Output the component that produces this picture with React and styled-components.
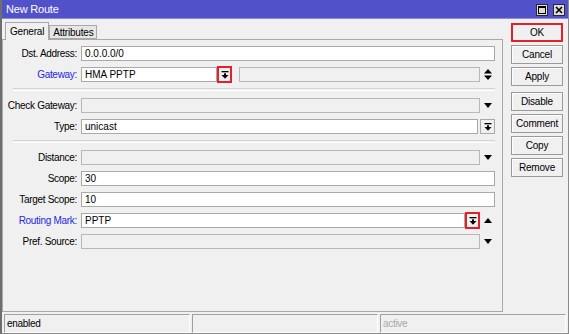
import styled, { createGlobalStyle } from "styled-components"

const Global = createGlobalStyle`
  html, body { margin: 0; padding: 0; }
  body {
    width: 569px;
    height: 334px;
    overflow: hidden;
    background: #f0f0f0;
    font-family: "Liberation Sans", Arial, sans-serif;
    font-size: 10px;
    color: #000;
  }
`

const Window = styled.div`
  width: 569px;
  height: 334px;
  box-sizing: border-box;
  border-left: 2px solid #6e6e6e;
  border-right: 1px solid #8a8a8a;
  border-bottom: 1px solid #8a8a8a;
  display: flex;
  flex-direction: column;
  background: #f0f0f0;
`

const TitleBar = styled.div`
  height: 18px;
  background: #5151c9;
  display: flex;
  align-items: center;
  justify-content: space-between;
  padding: 0 3px 0 4px;
  border-bottom: 1px solid #8c8cdc;
`

const Title = styled.span`
  color: #fff;
  font-size: 11px;
  letter-spacing: -0.2px;
`

const Controls = styled.div`
  display: flex;
  gap: 5px;
  margin-top: 2px;
`

const CtrlBox = styled.div`
  width: 10px;
  height: 10px;
  border: 1px solid #2a2a2a;
  background: #dcdcdc;
  display: flex;
  align-items: center;
  justify-content: center;
`

const Body = styled.div`
  flex: 1;
  display: flex;
  gap: 8px;
  padding-top: 1px;
`

const Left = styled.div`
  width: 501px;
  display: flex;
  flex-direction: column;
`

const Tabs = styled.div`
  display: flex;
  align-items: flex-end;
  height: 19px;
  padding-left: 3px;
`

const Tab = styled.div`
  height: ${p => (p.active ? "18px" : "14px")};
  padding: 0 ${p => (p.active ? "4px" : "3px")};
  display: flex;
  align-items: center;
  box-sizing: border-box;
  border: 1px solid #a8a8a8;
  border-bottom: ${p => (p.active ? "none" : "1px solid #a8a8a8")};
  background: ${p => (p.active ? "#f0f0f0" : "#e6e6e6")};
  margin-bottom: ${p => (p.active ? "-1px" : "0")};
  position: relative;
  z-index: ${p => (p.active ? 1 : 0)};
  letter-spacing: -0.2px;
`

const Panel = styled.div`
  flex: 1;
  border: 1px solid #a8a8a8;
  padding-top: 6px;
  margin-bottom: 2px;
`

const Row = styled.div`
  display: flex;
  align-items: center;
  height: 15px;
  margin-bottom: 6px;
  padding-right: 7px;
`

const Label = styled.div`
  width: 78px;
  padding-right: 4px;
  box-sizing: border-box;
  text-align: right;
  white-space: nowrap;
  letter-spacing: -0.3px;
  color: ${p => (p.link ? "#2626e6" : "#000")};
`

const Field = styled.div`
  flex: ${p => (p.fixed ? "0 0 auto" : "1")};
  width: ${p => p.fixed || "auto"};
  height: 15px;
  box-sizing: border-box;
  border: 1px solid ${p => (p.gray ? "#b8b8b8" : "#a9a9a9")};
  background: ${p => (p.gray ? "#f0f0f0" : "#fff")};
  padding-left: 3px;
  display: flex;
  align-items: center;
  margin-left: ${p => p.ml || "0"};
`

const DropBtn = styled.div`
  width: 15px;
  height: ${p => (p.marked ? "17px" : "15px")};
  box-sizing: border-box;
  border: ${p => (p.marked ? "2px solid #e4202a" : "1px solid #a9a9a9")};
  margin-left: ${p => (p.marked ? "0" : "2px")};
  background: #f0f0f0;
  display: flex;
  align-items: center;
  justify-content: center;
`

const ArrowCell = styled.div`
  width: 15px;
  display: flex;
  align-items: center;
  justify-content: center;
`

const Sep = styled.div`
  height: 1px;
  border-top: 1px solid #d5d5d5;
  border-bottom: 1px solid #fff;
  margin: 0 7px 7px 10px;
`

const Right = styled.div`
  width: 52px;
  display: flex;
  flex-direction: column;
  gap: 3px;
  padding-top: 3px;
`

const Button = styled.div`
  height: 19px;
  box-sizing: border-box;
  border: ${p => (p.marked ? "2px solid #e4202a" : "1px solid #9a9a9a")};
  background: #f0f0f0;
  box-shadow: ${p => (p.marked ? "none" : "inset 1px 1px #fff")};
  display: flex;
  align-items: center;
  justify-content: center;
  letter-spacing: -0.2px;
  margin-top: ${p => (p.spaced ? "3px" : "0")};
`

const StatusBar = styled.div`
  height: 19px;
  display: flex;
  gap: 2px;
  padding: 0 2px 0 2px;
`

const StatusCell = styled.div`
  flex: 1;
  box-sizing: border-box;
  border-top: 1px solid #a0a0a0;
  border-left: 1px solid #a0a0a0;
  border-bottom: 1px solid #fff;
  border-right: 1px solid #fff;
  padding-left: 2px;
  display: flex;
  align-items: center;
  color: ${p => (p.dim ? "#a8a8a8" : "#000")};
  letter-spacing: -0.3px;
`

const DropGlyph = () => (
  <svg width="8" height="8" viewBox="0 0 8 8">
    <rect x="0.5" y="0" width="7" height="1.3" fill="#000" />
    <rect x="3" y="2.3" width="2" height="2" fill="#000" />
    <polygon points="0.5,4 7.5,4 4,7.8" fill="#000" />
  </svg>
)

const Down = () => (
  <svg width="8" height="5" viewBox="0 0 8 5">
    <polygon points="0,0 8,0 4,5" fill="#000" />
  </svg>
)

const Up = () => (
  <svg width="8" height="5" viewBox="0 0 8 5">
    <polygon points="0,5 8,5 4,0" fill="#000" />
  </svg>
)

const UpDown = () => (
  <svg width="8" height="11" viewBox="0 0 8 11">
    <polygon points="0,4.5 8,4.5 4,0" fill="#000" />
    <polygon points="0,6.5 8,6.5 4,11" fill="#000" />
  </svg>
)

export default function App() {
  return (
    <Window>
      <Global />
      <TitleBar>
        <Title>New Route</Title>
        <Controls>
          <CtrlBox>
            <svg width="8" height="8" viewBox="0 0 8 8">
              <rect x="0.5" y="0.5" width="7" height="7" fill="none" stroke="#000" />
              <rect x="0.5" y="0.5" width="7" height="1.5" fill="#000" />
            </svg>
          </CtrlBox>
          <CtrlBox>
            <svg width="8" height="8" viewBox="0 0 8 8">
              <path d="M1 1 L7 7 M7 1 L1 7" stroke="#000" strokeWidth="1.6" />
            </svg>
          </CtrlBox>
        </Controls>
      </TitleBar>
      <Body>
        <Left>
          <Tabs>
            <Tab active>General</Tab>
            <Tab>Attributes</Tab>
          </Tabs>
          <Panel>
            <Row>
              <Label>Dst. Address:</Label>
              <Field>0.0.0.0/0</Field>
            </Row>
            <Row>
              <Label link>Gateway:</Label>
              <Field fixed="136px">HMA PPTP</Field>
              <DropBtn marked><DropGlyph /></DropBtn>
              <Field gray ml="7px" />
              <ArrowCell><UpDown /></ArrowCell>
            </Row>
            <Sep />
            <Row>
              <Label>Check Gateway:</Label>
              <Field gray />
              <ArrowCell><Down /></ArrowCell>
            </Row>
            <Row>
              <Label>Type:</Label>
              <Field>unicast</Field>
              <DropBtn><DropGlyph /></DropBtn>
            </Row>
            <Sep />
            <Row>
              <Label>Distance:</Label>
              <Field gray />
              <ArrowCell><Down /></ArrowCell>
            </Row>
            <Row>
              <Label>Scope:</Label>
              <Field>30</Field>
            </Row>
            <Row>
              <Label>Target Scope:</Label>
              <Field>10</Field>
            </Row>
            <Row>
              <Label link>Routing Mark:</Label>
              <Field>PPTP</Field>
              <DropBtn marked><DropGlyph /></DropBtn>
              <ArrowCell><Up /></ArrowCell>
            </Row>
            <Row>
              <Label>Pref. Source:</Label>
              <Field gray />
              <ArrowCell><Down /></ArrowCell>
            </Row>
          </Panel>
        </Left>
        <Right>
          <Button marked>OK</Button>
          <Button>Cancel</Button>
          <Button>Apply</Button>
          <Button spaced>Disable</Button>
          <Button>Comment</Button>
          <Button>Copy</Button>
          <Button>Remove</Button>
        </Right>
      </Body>
      <StatusBar>
        <StatusCell>enabled</StatusCell>
        <StatusCell />
        <StatusCell dim>active</StatusCell>
      </StatusBar>
    </Window>
  )
}
